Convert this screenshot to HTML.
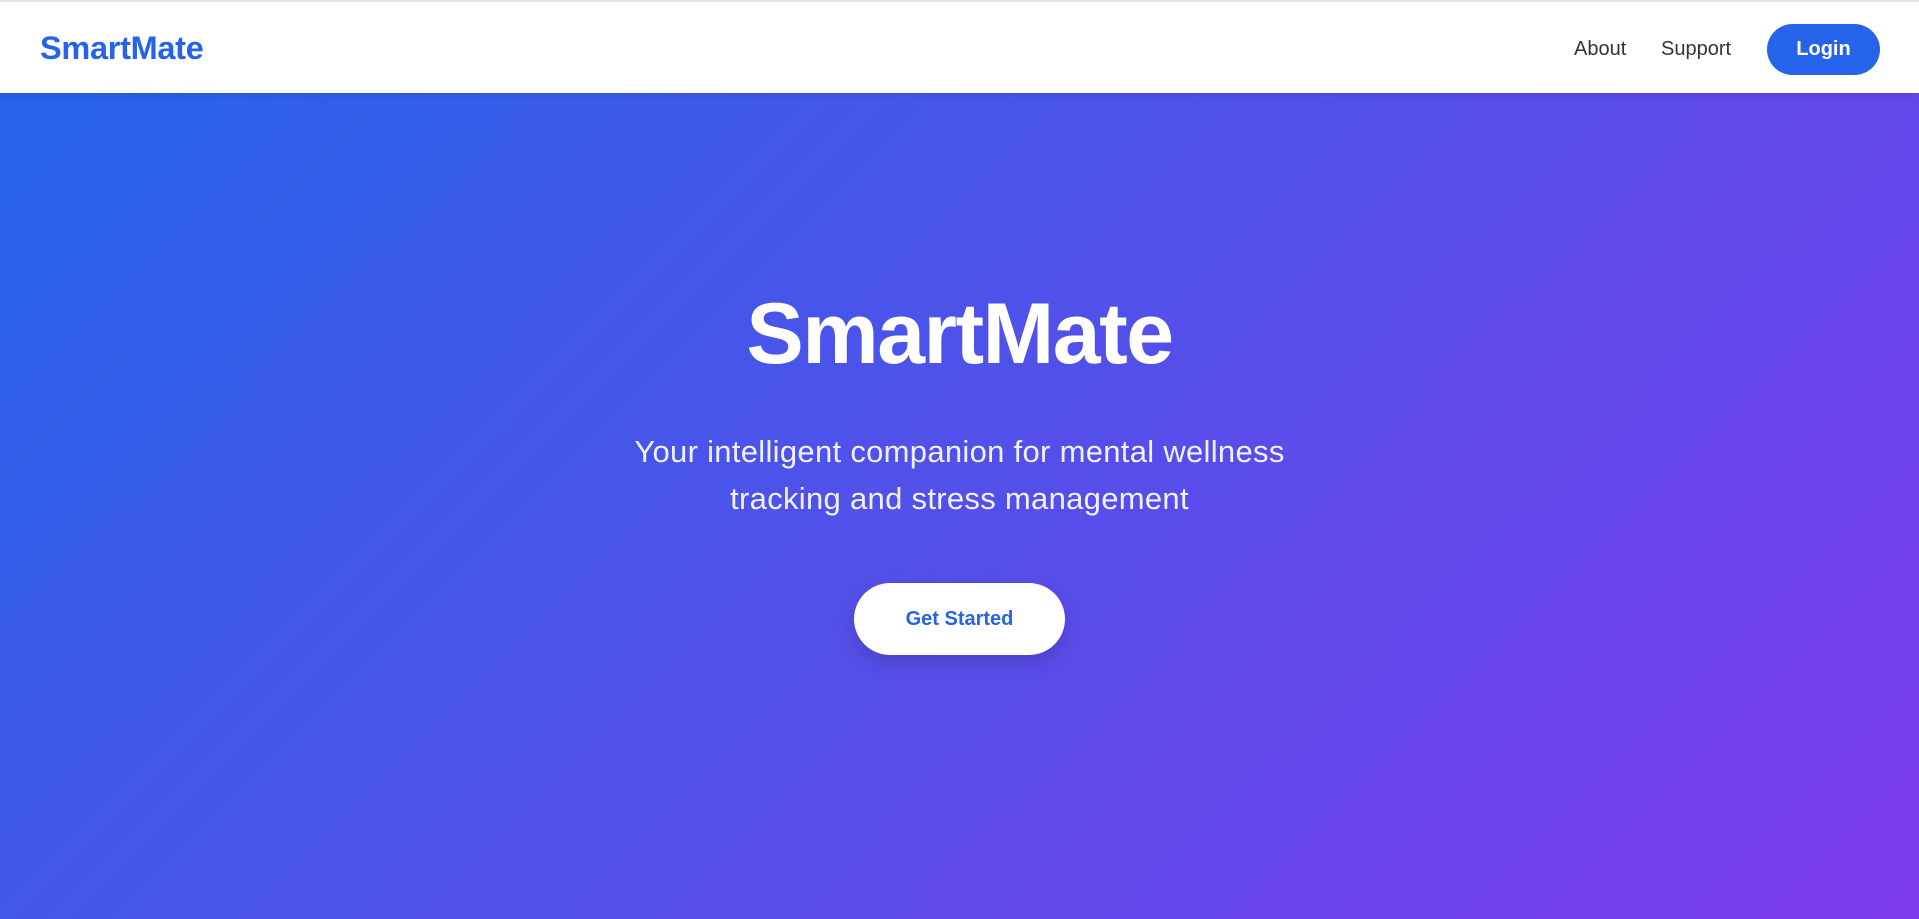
<!DOCTYPE html>
<html><head><style>
*{margin:0;padding:0;box-sizing:border-box}
body{width:1919px;height:919px;overflow:hidden;font-family:"Liberation Sans",sans-serif}
nav{position:absolute;top:0;left:0;width:1919px;height:93px;background:#fff;border-top:2px solid #e5e5e5;box-shadow:0 2px 6px rgba(0,0,0,.1);z-index:2}
.logo{position:absolute;left:40px;top:28px;font-size:32.5px;font-weight:bold;color:#2563eb;letter-spacing:-0.3px}
.nl{position:absolute;top:36px;font-size:20px;color:#333}
.login{position:absolute;left:1767px;top:22px;width:113px;height:51px;border-radius:26px;background:#2563eb;color:#fff;font-size:20px;font-weight:bold;text-align:center;line-height:51px}
.hero{position:absolute;top:93px;left:0;width:1919px;height:826px;background:linear-gradient(135deg,#2563eb 0%,#4f52ea 45%,#7c3aed 100%)}
h1{position:absolute;top:284px;width:1919px;text-align:center;font-size:86px;color:#fff;font-weight:bold;letter-spacing:-1.5px;line-height:100px}
.sub{position:absolute;top:428px;width:1919px;text-align:center;font-size:31px;letter-spacing:0.3px;line-height:47px;color:rgba(255,255,255,.92)}
.btn{position:absolute;left:854px;top:583px;width:211px;height:72px;border-radius:36px;background:#fff;color:#2563eb;font-size:20px;font-weight:bold;text-align:center;line-height:72px;box-shadow:0 8px 20px rgba(0,0,0,.15)}
</style></head><body>
<nav><div class="logo">SmartMate</div>
<div class="nl" style="left:1574px">About</div>
<div class="nl" style="left:1661px">Support</div>
<div class="login">Login</div></nav>
<div class="hero"></div>
<h1>SmartMate</h1>
<div class="sub">Your intelligent companion for mental wellness<br>tracking and stress management</div>
<div class="btn">Get Started</div>
</body></html>
